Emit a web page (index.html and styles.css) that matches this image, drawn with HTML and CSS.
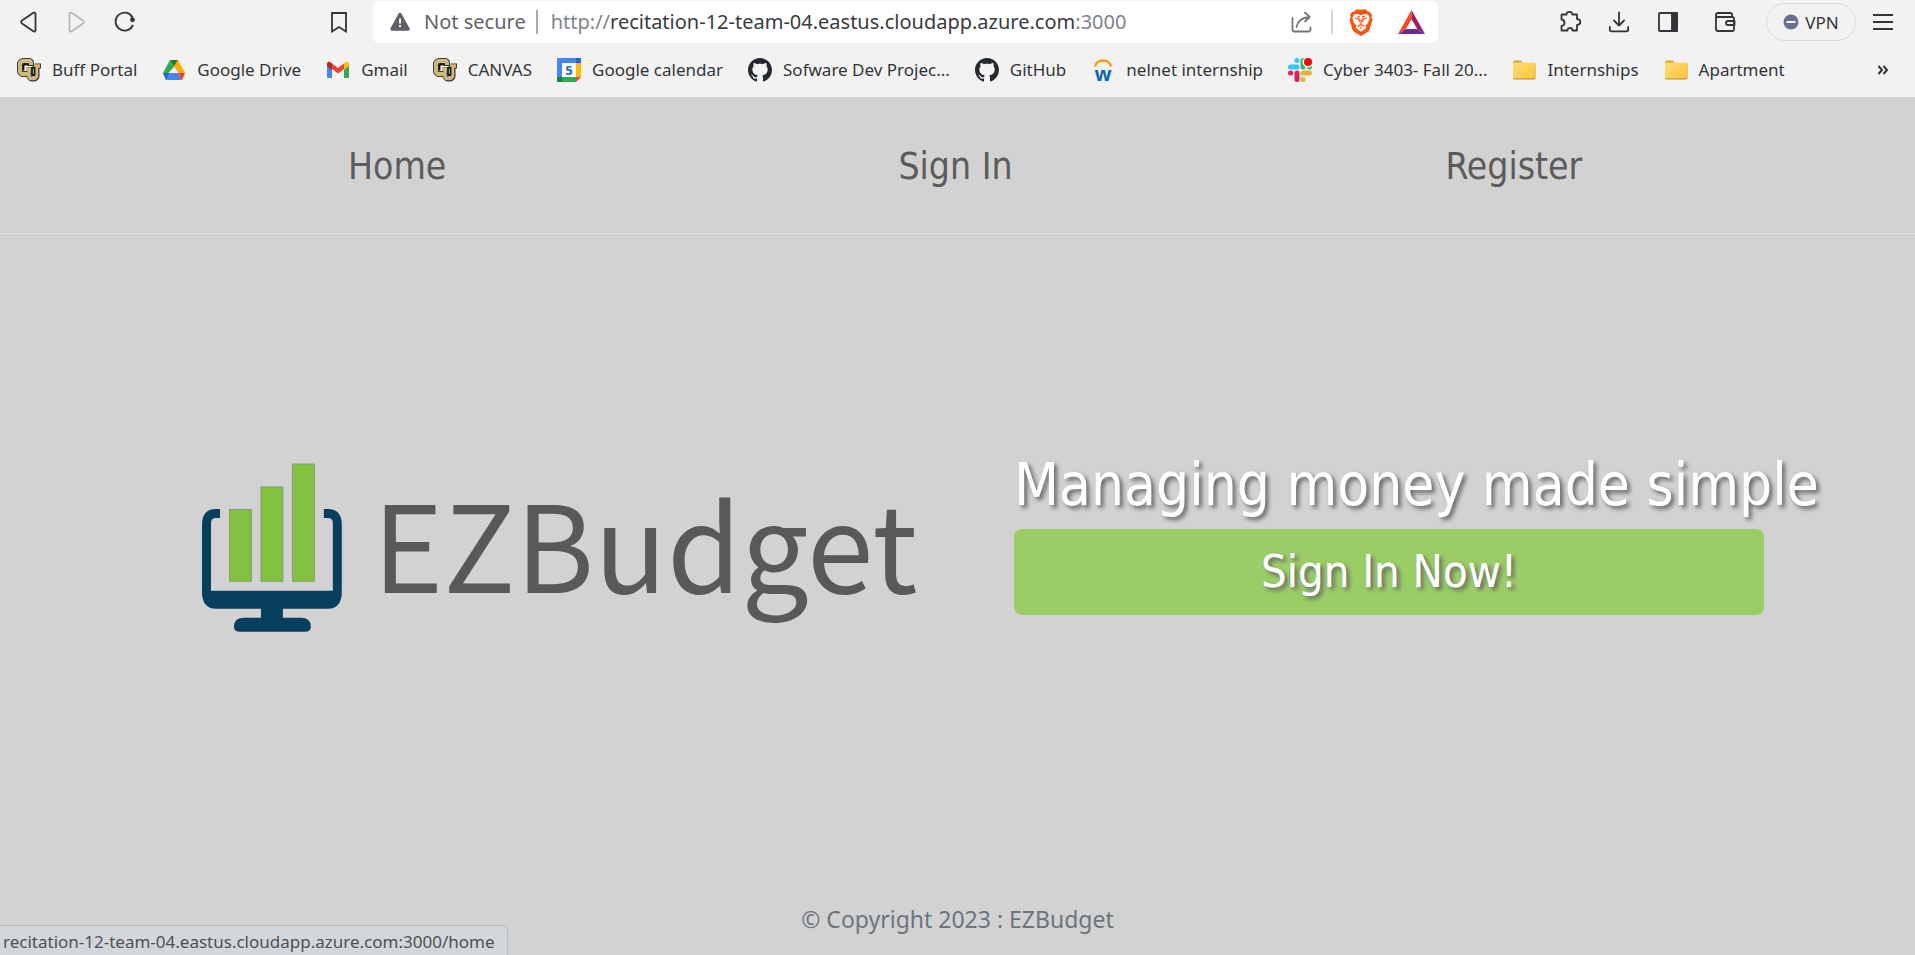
FILE: index.html
```html
<!DOCTYPE html>
<html lang="en">
<head>
<meta charset="utf-8">
<title>EZBudget</title>
<link rel="stylesheet" href="styles.css">
</head>
<body>
<svg class="defs" width="0" height="0" aria-hidden="true">
  <defs>
    <linearGradient id="folder-fill" x1="0" y1="0" x2="1" y2="1"><stop offset="0" stop-color="#ffe07a"/><stop offset="1" stop-color="#fbc233"/></linearGradient>
    <symbol id="cu" viewBox="0 0 24 24">
      <g fill="none" stroke-linejoin="bevel">
        <path d="M14 8V4.500L13 3H5L3 5v9l2 2h5" stroke="#3f3a35" stroke-width="6"/>
        <path d="M12 9v10l2 2h4l2-2V8M17.500 8H24" stroke="#3f3a35" stroke-width="5"/>
        <path d="M14 7V4.500L13 3H5L3 5v9l2 2h6" stroke="#cfb87c" stroke-width="4"/>
        <path d="M9 11h5M12 11v8l1.500 1.500h4l2-2V8M17 8h6" stroke="#cfb87c" stroke-width="3.500"/>
        <path d="M6.500 12.500V6.500h5.500M15 9.500h2.500V17H15z" stroke="#171717" stroke-width="1.800"/>
      </g>
    </symbol>
    <symbol id="github" viewBox="0 0 16 16"><path fill="#24292f" fill-rule="evenodd" d="M8 0C3.580 0 0 3.580 0 8c0 3.540 2.290 6.530 5.470 7.590.4.070.55-.17.55-.38 0-.19-.01-.82-.01-1.490-2.010.37-2.530-.49-2.690-.94-.09-.23-.48-.94-.82-1.130-.28-.15-.68-.52-.01-.53.63-.01 1.080.58 1.230.82.72 1.210 1.870.87 2.330.66.070-.52.28-.87.51-1.070-1.780-.2-3.640-.89-3.640-3.950 0-.87.31-1.590.82-2.150-.08-.2-.36-1.020.08-2.120 0 0 .67-.21 2.200.82.64-.18 1.320-.27 2-.27s1.360.09 2 .27c1.530-1.040 2.200-.82 2.200-.82.44 1.100.16 1.920.08 2.120.51.56.82 1.270.82 2.150 0 3.070-1.870 3.750-3.650 3.950.29.25.54.73.54 1.480 0 1.070-.01 1.930-.01 2.200 0 .21.15.46.55.38A8.010 8.010 0 0 0 16 8c0-4.420-3.580-8-8-8z"/></symbol>
    <symbol id="folder" viewBox="0 0 24 24">
      <path d="M1 4.500Q1 2.500 3 2.500h5.500L11 5v4H1z" fill="#dba218"/>
      <rect x="1" y="5" width="22.500" height="16.500" rx="1.500" fill="#b98b2b"/>
      <rect x="1" y="4.500" width="22.500" height="16" rx="1.500" fill="url(#folder-fill)"/>
    </symbol>
  </defs>
</svg>

<header class="browser">
  <div class="toolbar">
    <div class="tools tools-nav">
      <button class="tool" aria-label="Back"><svg viewBox="0 0 22 22" class="line"><path d="M17.500 2.500v17q-.5 2-2.500.5L4 12.500q-1.700-1.500 0-3L15 2q2-1.200 2.500.5z"/></svg></button>
      <button class="tool" aria-label="Forward" disabled><svg viewBox="0 0 22 22" class="line"><path d="M3.500 2.500v17q.5 2 2.500.5l11-7.500q1.700-1.500 0-3L6 2q-2-1.200-2.500.5z"/></svg></button>
      <button class="tool" aria-label="Reload"><svg viewBox="0 0 22 22" class="line"><path d="M18.700 14.500A9 9 0 1 1 18.300 6"/><circle cx="18.500" cy="8.800" r="2.400" fill="#323539" stroke="none"/><path d="M17.500 5.500l1 3"/></svg></button>
    </div>
    <button class="tool bookmark-page" aria-label="Bookmark this page"><svg viewBox="0 0 22 22" class="line square"><path d="M4 2h14v18.500l-7-4.500-7 4.500z"/></svg></button>
    <div class="address">
      <svg class="warn" viewBox="0 0 20 20" aria-hidden="true"><path d="M10 2.500L18 17H2z" fill="#5f6368" stroke="#5f6368" stroke-width="3.500" stroke-linejoin="round"/><path d="M10 6.500v5M10 13v2.200" stroke="#fff" stroke-width="1.800"/></svg>
      <span class="secure">Not secure</span>
      <span class="rule"></span>
      <div class="url" role="textbox" contenteditable="true" spellcheck="false" aria-label="Address">http://<span class="host">recitation-12-team-04.eastus.cloudapp.azure.com</span>:3000</div>
      <button class="tool" aria-label="Share"><svg viewBox="0 0 22 22" class="line muted"><path d="M1.500 7v11.500q0 2 2 2h14q2 0 2-2V16.500M5.500 16Q7 7 18.500 6M14 1.500L18.700 6 14 10.500"/></svg></button>
      <span class="rule rule-light"></span>
      <button class="tool" aria-label="Brave Shields"><svg class="brave" viewBox="0 0 24 28"><path d="M5 2.500L7 .5h10l2 2 2.500.5 2 3.500-.8 2L24 11l-3 10q-.7 2-2.500 3L12 28l-6.500-4Q3.700 23 3 21L0 11l1.300-2.500-.8-2L2.500 3z" fill="#fb5411"/><path d="M4.500 6l3-.7 4.500.9 4.500-.9 3 .7 1.500 3-1.500 5-3 3.500 1 2-5.500 4-5.500-4 1-2-3-3.500L3 9z" fill="#fff"/><path d="M6 9.500l4.500 1-.7 3M18 9.500l-4.500 1 .7 3M12 11v6M8.500 18l3.500-2 3.500 2M12 18.500v2M8 7.500l3 1M16 7.500l-3 1" fill="none" stroke="#fb5411" stroke-width="1.300"/></svg></button>
      <button class="tool" aria-label="Brave Rewards"><svg class="bat" viewBox="0 0 27 24"><path d="M13.500 0L0 24l8-5 5.500-9.500z" fill="#ff4724"/><path d="M13.500 0L27 24l-8-5-5.500-9.500z" fill="#9e1f63"/><path d="M0 24h27l-8-5H8z" fill="#662d91"/><path d="M13.500 9.500L8 19h11z" fill="#fff"/></svg></button>
    </div>
    <div class="tools tools-right">
      <button class="tool" aria-label="Extensions"><svg viewBox="0 0 22 22" class="line"><path d="M3 3.500h4.500C7.300 0 13.500 0 13.300 3.500H18v4.500c4.500.3 4.500 5.700 0 6v5.500h-4.500c0-3.500-5-3.500-5 0H2.500v-4.500c4-.5 4-6 0-6.500V4z"/></svg></button>
      <button class="tool" aria-label="Downloads"><svg viewBox="0 0 22 22" class="line"><path d="M11 1.500v13M6 9.500l5 5 5-5M1.800 16v2.500q0 1.800 1.800 1.800h14.800q1.800 0 1.800-1.800V16"/></svg></button>
      <button class="tool" aria-label="Sidebar"><svg viewBox="0 0 22 22" class="line"><rect x="2" y="2" width="18" height="18" rx="1"/><path d="M15 2h5v18h-5z" fill="#323539"/></svg></button>
      <button class="tool wallet" aria-label="Wallet"><svg viewBox="0 0 22 22" class="line"><path d="M18 6V3.500q0-1.500-1.500-1.500H4Q2 2 2 4v14q0 2 2 2h14.500q1.500 0 1.500-1.500V7.500Q20 6 18.500 6H4Q2 6 2 4M20.500 10H14q-2 0-2 2t2 2h6.500z"/></svg></button>
      <button class="vpn"><svg viewBox="0 0 16 16" aria-hidden="true"><circle cx="8" cy="8" r="7.500" fill="#6b7090"/><path d="M3.500 8h9" stroke="#fff" stroke-width="2"/></svg>VPN</button>
      <button class="tool" aria-label="Menu"><svg viewBox="0 0 22 22" class="line square"><path d="M1 4h20M1 11h20M1 18h20"/></svg></button>
    </div>
  </div>

  <nav class="bookmarks" aria-label="Bookmarks">
    <a href="#"><svg><use href="#cu"/></svg>Buff Portal</a>
    <a href="#"><svg viewBox="0 0 24 24"><path d="M8 2h8l-4 7z" fill="#188038"/><path d="M8 2L1 15l3.500 2L12 9z" fill="#34a853"/><path d="M16 2l7 13h-6.500L12 8.500z" fill="#fbae04"/><path d="M1 15h6.500L5 22q-1 0-1.500-1z" fill="#1967d2"/><path d="M7.500 15h9l2.500 7H5z" fill="#4285f4"/><path d="M16.500 15H23l-2.500 6q-.5 1-1.500 1z" fill="#ea4335"/></svg>Google Drive</a>
    <a href="#"><svg viewBox="0 0 24 24"><path d="M1 7l5 4v9H2.500Q1 20 1 18.500z" fill="#4285f4"/><path d="M23 7l-5 4v9h3.500q1.500 0 1.500-1.500z" fill="#34a853"/><path d="M6 5.500l6 4.500 6-4.500V11l-6 4.500L6 11z" fill="#ea4335"/><path d="M1 8V6q0-3 3-2l2 1.500V12z" fill="#c5221f"/><path d="M23 8V6q0-3-3-2l-2 1.500V12z" fill="#fbbc04"/></svg>Gmail</a>
    <a href="#"><svg><use href="#cu"/></svg>CANVAS</a>
    <a href="#"><svg viewBox="0 0 24 24"><path d="M1 0h18v5H5v14H0V1q0-1 1-1z" fill="#4285f4"/><path d="M19 0h4q1 0 1 1v4h-5z" fill="#1967d2"/><path d="M19 5h5v14h-5z" fill="#fbbc04"/><path d="M5 19h14v5H5z" fill="#34a853"/><path d="M0 19h5v5H1q-1 0-1-1z" fill="#188038"/><path d="M19 19h5l-5 5z" fill="#ea4335"/><path d="M5 5h14v14H5z" fill="#fff"/><text x="12" y="17" text-anchor="middle" class="cal-day">5</text></svg>Google calendar</a>
    <a href="#"><svg><use href="#github"/></svg>Sofware Dev Projec...</a>
    <a href="#"><svg><use href="#github"/></svg>GitHub</a>
    <a href="#"><svg class="overflowing" viewBox="0 0 24 24"><path d="M4 8.500C6 .5 18 .5 20 8.500" fill="none" stroke="#f9a11b" stroke-width="2.500"/><text x="12" y="23" text-anchor="middle" class="nelnet">w</text></svg>nelnet internship</a>
    <a href="#"><svg viewBox="0 0 24 24"><g fill="none" stroke-width="5" stroke-linecap="round"><path d="M2.500 9H9M9 2.500v.1" stroke="#36c5f0"/><path d="M15 2.500V9M21.500 9h-.1" stroke="#2eb67d"/><path d="M15 15h6.500M15 21.500v-.1" stroke="#ecb22e"/><path d="M9 15v6.500M2.500 15h.1" stroke="#e01e5a"/></g><circle cx="20" cy="4" r="5.500" fill="#f2f2f2"/><circle cx="20" cy="4" r="4" fill="#f00"/></svg>Cyber 3403- Fall 20...</a>
    <a href="#"><svg><use href="#folder"/></svg>Internships</a>
    <a href="#"><svg><use href="#folder"/></svg>Apartment</a>
    <button class="more" aria-label="More bookmarks"><svg viewBox="0 0 12 12"><path d="M1.500 2l3.500 4-3.500 4M6.500 2L10 6l-3.500 4" fill="none" stroke="#323539" stroke-width="2"/></svg></button>
  </nav>
</header>

<nav class="site-nav" aria-label="Main">
  <a href="#">Home</a>
  <a href="#">Sign In</a>
  <a href="#">Register</a>
</nav>

<main class="hero">
  <svg class="logo" viewBox="0 0 712 170" role="img" aria-label="EZBudget">
    <path fill="#083f5e" d="M20 46h-4Q2 46 2 62v67q0 17 14 17h45v9H44q-10 0-10 9 0 5 6 5h65q6 0 6-5 0-9-10-9H83v-9h45q14 0 14-17V62q0-16-14-16h-4v9h4q5 0 5 5v68H11V60q0-5 5-5h4z"/>
    <g fill="#83c141" stroke="#8a9a7c" stroke-width="1"><path d="M29.500 46.500h22v72h-22zM61 24h22v94.500H61zM92.500 1h22v117.500h-22z"/></g>
    <text class="wordmark" x="173" y="130">EZBudget</text>
  </svg>
  <div class="pitch">
    <h1>Managing money made simple</h1>
    <button class="cta">Sign In Now!</button>
  </div>
</main>

<footer class="copyright">© Copyright 2023 : EZBudget</footer>
<div class="status">recitation-12-team-04.eastus.cloudapp.azure.com:3000/home</div>
</body>
</html>
```

FILE: styles.css
```css
* { box-sizing: border-box; }

html, body { height: 100%; }

body {
  margin: 0;
  display: flex;
  flex-direction: column;
  background: #d2d2d2;
  color: #5c5c5c;
  font-family: "Noto Sans", sans-serif;
  overflow-x: hidden;
}

a { color: inherit; text-decoration: none; }

button {
  border: 0;
  padding: 0;
  background: none;
  color: inherit;
  font: inherit;
  cursor: pointer;
}

svg { display: block; flex: none; }
.defs { position: absolute; }
.overflowing { overflow: visible; }

/* Browser chrome */
.browser {
  background: #f2f2f2;
  border-bottom: 2px solid #d0d4d8;
  color: #323539;
}

.toolbar {
  display: flex;
  align-items: center;
  height: 44px;
  padding: 0 21px 0 18px;
}

.tools { display: flex; align-items: center; }
.tools-nav { gap: 26px; }
.tools-right { gap: 27px; margin-left: 121px; }
.tool svg { width: 22px; height: 22px; }
.tool:disabled { opacity: 0.3; }
.bookmark-page { margin: 0 23px 0 192px; }
.wallet { margin: 0 3px 0 8px; }

.line {
  fill: none;
  stroke: #323539;
  stroke-width: 1.8;
  stroke-linecap: round;
  stroke-linejoin: round;
}
.line.square { stroke-linecap: butt; stroke-linejoin: miter; }
.line.muted { stroke: #777; }

.address {
  flex: 1;
  display: flex;
  align-items: center;
  height: 42px;
  padding: 0 13px 0 17px;
  border-radius: 6px;
  background: #fff;
  font-size: 20px;
  line-height: 28px;
}
.warn { width: 20px; height: 20px; }
.secure { margin: 0 10px 0 14px; color: #5f6368; }
.rule { width: 2px; height: 24px; background: #aaa; }
.rule-light { margin: 0 16px 0 18px; background: #d5d5d5; }
.url { flex: 1; margin-left: 13px; color: #80858a; white-space: nowrap; outline: 0; }
.host { color: #3a3b3d; }
.tool .brave { width: 24px; height: 27px; }
.tool .bat { width: 27px; height: 24px; margin-left: 25px; }

.vpn {
  display: flex;
  align-items: center;
  justify-content: center;
  gap: 6px;
  width: 90px;
  height: 38px;
  margin-right: -11px;
  border: 1px solid #dcdcdc;
  border-radius: 19px;
  font-size: 17px;
}
.vpn svg { width: 16px; height: 16px; }

.bookmarks {
  display: flex;
  align-items: center;
  gap: 25px;
  height: 53px;
  padding: 0 26px 2px 17px;
  font-size: 17px;
}
.bookmarks a {
  display: flex;
  align-items: center;
  gap: 11px;
  white-space: nowrap;
}
.bookmarks a svg { width: 24px; height: 24px; }
.more { margin-left: auto; }
.more svg { width: 12px; height: 12px; }
.cal-day { font: bold 13px "Noto Sans", sans-serif; fill: #1967d2; }
.nelnet { font: bold 20px "Noto Sans", sans-serif; fill: #0b68b1; }

/* Site */
.site-nav {
  display: grid;
  grid-template-columns: repeat(3, 1fr);
  padding: 44px 122px 42px 118px;
  border-bottom: 1px solid #e0e0e0;
  font: 37px/48px "DejaVu Sans Condensed", "DejaVu Sans", sans-serif;
  text-align: center;
}

.hero {
  flex: 1;
  display: grid;
  grid-template-columns: minmax(0, 711fr) minmax(0, 750fr);
  column-gap: 103px;
  align-items: center;
  padding: 0 151px 0 200px;
}

.logo { width: 100%; height: auto; overflow: visible; }
.wordmark { font: 120px "Noto Sans CJK JP", "Open Sans", sans-serif; fill: #595959; }

.pitch {
  margin-bottom: 32px;
  color: #fff;
  font-family: "DejaVu Sans Condensed", "DejaVu Sans", sans-serif;
  text-shadow: 3px 3px 4px #666;
}
.pitch h1 {
  margin: 0 0 8px;
  font-size: 58px;
  font-weight: 400;
  line-height: 72px;
  white-space: nowrap;
}
.cta {
  width: 100%;
  padding: 13px;
  border-radius: 8px;
  background: #9bcd67;
  font-size: 45px;
  line-height: 60px;
  text-shadow: inherit;
}

.copyright {
  padding: 40px 0 18px;
  color: #6c757d;
  font-size: 23px;
  line-height: 36px;
  text-align: center;
}

.status {
  position: fixed;
  left: 0;
  bottom: 0;
  height: 30px;
  padding: 0 12px 0 3px;
  border: solid #b9bcbf;
  border-width: 1px 1px 0 0;
  border-radius: 0 6px 0 0;
  background: #d3d7da;
  color: #4d5156;
  font-size: 17px;
  line-height: 32px;
}
```
